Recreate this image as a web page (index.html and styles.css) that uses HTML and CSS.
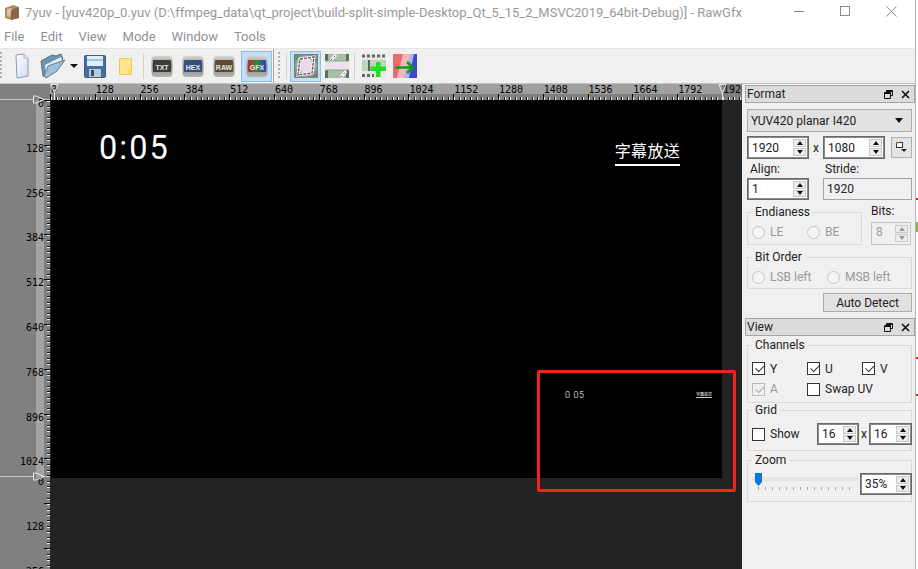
FILE: index.html
```html
<!DOCTYPE html>
<html>
<head>
    <meta charset="utf-8">
    <title>RawGfx</title>
    <link rel="stylesheet" href="styles.css">
</head>
<body>
<div id="screen">
<div id="window">
    <div class="titlebar">
        <svg class="app-icon" width="16" height="17" viewBox="0 0 16 17">
            <path d="M1 4 L9 1 L15 3 V14 L7 16 L1 14 Z" fill="#b08a68"/>
            <path d="M7 16 V6 L15 3 V14 Z" fill="#8a6646"/>
            <path d="M3 5 L8 4 L6 13 L3 12 Z" fill="#d9c3a8"/>
        </svg>
        <span class="title-text">7yuv - [yuv420p_0.yuv (D:\ffmpeg_data\qt_project\build-split-simple-Desktop_Qt_5_15_2_MSVC2019_64bit-Debug)] - RawGfx</span>
        <div class="win-btns">
            <svg width="11" height="11" viewBox="0 0 11 11"><path d="M0 5.5 H10" stroke="#8c8c8c"/></svg>
            <svg width="11" height="11" viewBox="0 0 11 11"><rect x="0.5" y="0.5" width="9" height="9" fill="none" stroke="#8c8c8c"/></svg>
            <svg width="11" height="11" viewBox="0 0 11 11"><path d="M0.5 0.5 L10.5 10.5 M10.5 0.5 L0.5 10.5" stroke="#8c8c8c"/></svg>
        </div>
    </div>

    <div class="menubar">
        <span>File</span><span>Edit</span><span>View</span><span>Mode</span><span>Window</span><span>Tools</span>
    </div>

    <div class="toolbar">
        <i class="grip first"></i>
        <div class="tool">
            <svg width="14" height="26" viewBox="0 0 14 26">
                <defs>
                    <linearGradient id="paper" x1="0" y1="0" x2="1" y2="1"><stop offset="0" stop-color="#ffffff"/><stop offset="1" stop-color="#cfdcf2"/></linearGradient>
                    <linearGradient id="shell" x1="0" y1="0" x2="0" y2="1"><stop offset="0" stop-color="#d8d4cc"/><stop offset="0.5" stop-color="#8a8a8a"/><stop offset="1" stop-color="#b8b4ac"/></linearGradient>
                </defs>
                <path d="M1 2 L9 1 L13 5 V23 L2 25 Z" fill="url(#paper)" stroke="#8a9ab4"/>
                <path d="M9 1 V5 H13" fill="#e8eefa" stroke="#a8b6cc"/>
            </svg>
        </div>
        <div class="tool">
            <svg width="26" height="26" viewBox="0 0 26 26">
                <path d="M1 8 L12 2 L16 3 L21 1 L23 6 L6 24 L3 23 Z" fill="#6f94b0" stroke="#5a6e80"/>
                <path d="M5 12 L21 4 L22 7 L6 20 Z" fill="#e3edf2"/>
                <path d="M4 23 L8 13 L25 7 L17 18 L6 25 Z" fill="#9fc0d8" stroke="#5f7c92"/>
            </svg>
        </div>
        <i class="drop"></i>
        <div class="tool">
            <svg width="22" height="23" viewBox="0 0 22 23">
                <rect x="0.5" y="0.5" width="21" height="22" rx="1" fill="#3f6ea8" stroke="#48586e"/>
                <rect x="3" y="1" width="16" height="10" fill="#dff0f6"/>
                <rect x="3" y="4" width="16" height="2" fill="#9cc6da"/>
                <rect x="5" y="14" width="12" height="8" fill="#b9c8d8"/>
                <rect x="7" y="15" width="3" height="6" fill="#3a4a60"/>
            </svg>
        </div>
        <div class="tool">
            <svg width="13" height="17" viewBox="0 0 13 17">
                <path d="M0.5 0.5 H12.5 V16.5 H0.5 Z" fill="#fee493" stroke="#f2c94c"/>
                <path d="M10 16 V12 H12.5" fill="none" stroke="#f2c94c"/>
            </svg>
        </div>
        <i class="sep"></i>
        <div class="tool"><svg width="22" height="23" viewBox="0 0 22 23"><rect x="0.5" y="1" width="21" height="21" rx="4" fill="url(#shell)"/><rect x="2" y="5" width="18" height="12" rx="1" fill="#3c3c3c"/><text x="11" y="14.5" class="chip">TXT</text></svg></div>
        <div class="tool"><svg width="22" height="23" viewBox="0 0 22 23"><rect x="0.5" y="1" width="21" height="21" rx="4" fill="url(#shell)"/><rect x="2" y="5" width="18" height="12" rx="1" fill="#34507e"/><text x="11" y="14.5" class="chip">HEX</text></svg></div>
        <div class="tool"><svg width="22" height="23" viewBox="0 0 22 23"><rect x="0.5" y="1" width="21" height="21" rx="4" fill="url(#shell)"/><rect x="2" y="5" width="18" height="12" rx="1" fill="#5c4a34"/><text x="11" y="14.5" class="chip">RAW</text></svg></div>
        <div class="tool on shift"><svg width="22" height="23" viewBox="0 0 22 23"><defs><linearGradient id="rgb" x1="0" y1="0" x2="1" y2="0"><stop offset="0" stop-color="#c02828"/><stop offset="0.5" stop-color="#2c8a3c"/><stop offset="1" stop-color="#2c3cc0"/></linearGradient></defs><rect x="0.5" y="1" width="21" height="21" rx="4" fill="url(#shell)"/><rect x="2" y="5" width="18" height="12" rx="1" fill="url(#rgb)"/><text x="11" y="14.5" class="chip">GFX</text></svg></div>
        <i class="break"></i>
        <i class="grip"></i>
        <i class="sep wide"></i>
        <div class="tool on">
            <svg width="24" height="24" viewBox="0 0 24 24">
                <defs><radialGradient id="glow"><stop offset="0.5" stop-color="#e8dce6"/><stop offset="1" stop-color="#6f8a74"/></radialGradient></defs>
                <rect width="24" height="24" fill="url(#glow)"/>
                <path d="M6 5 L20 3 L18 19 L4 21 Z" fill="none" stroke="#fff" stroke-width="3"/>
                <path d="M6 5 L20 3 L18 19 L4 21 Z" fill="none" stroke="#3c6e40" stroke-width="1.5" stroke-dasharray="3 5"/>
                <path d="M6 5 L20 3 L18 19 L4 21 Z" fill="none" stroke="#c030b0" stroke-width="1.5" stroke-dasharray="3 5" stroke-dashoffset="4"/>
            </svg>
        </div>
        <div class="tool">
            <svg width="24" height="24" viewBox="0 0 24 24">
                <rect width="24" height="24" fill="#a8bca8"/>
                <rect y="0" width="3" height="24" fill="#5f6e60"/>
                <rect x="21" y="0" width="3" height="24" fill="#5f6e60"/>
                <rect y="7" width="24" height="9" fill="#f0dff0"/>
                <path d="M0 7 H24 M0 16 H24" stroke="#6fb870"/>
                <path d="M6 6 L11 1 M16 23 L21 17" stroke="#fff" stroke-width="3"/>
                <path d="M6 6 L11 1 M16 23 L21 17" stroke="#a030a0" stroke-dasharray="2 2"/>
            </svg>
        </div>
        <i class="sep narrow"></i>
        <div class="tool">
            <svg width="24" height="24" viewBox="0 0 24 24">
                <rect width="24" height="24" fill="#ece4ec"/>
                <path d="M0 2 H24 M0 21.5 H12" stroke="#5f6e60" stroke-width="3" stroke-dasharray="3 2"/>
                <rect y="6" width="24" height="11" fill="#c0d2c0"/>
                <rect x="6" y="6" width="2" height="11" fill="#606060"/>
                <path d="M14 8 H18.5 V12.5 H24 V17 H18.5 V23 H14 V17 H8.5 V12.5 H14 Z" fill="#22e01c"/>
            </svg>
        </div>
        <div class="tool">
            <svg width="24" height="24" viewBox="0 0 24 24">
                <rect width="24" height="24" fill="#f4b8b8"/>
                <path d="M0 0 H10 L4 24 H0 Z" fill="#e86c6c"/>
                <path d="M17 0 H24 V24 H11 Z" fill="#aab2f0"/>
                <path d="M21 0 H24 V24 H16 Z" fill="#3c48c8"/>
                <path d="M2 13.5 H19 M14 8 L20 13.5 L14 19" fill="none" stroke="#169a16" stroke-width="2.5"/>
            </svg>
        </div>
    </div>

    <div class="main">
        <div class="workspace">
            <div class="corner"></div>
            <div class="hruler">
                <span>0</span><span>128</span><span>256</span><span>384</span><span>512</span><span>640</span><span>768</span><span>896</span><span>1024</span><span>1152</span><span>1280</span><span>1408</span><span>1536</span><span>1664</span><span>1792</span><span>1920</span>
            </div>
            <div class="vruler">
                <div class="vseg lit">
                    <span>0</span><span>128</span><span>256</span><span>384</span><span>512</span><span>640</span><span>768</span><span>896</span><span>1024</span>
                </div>
                <div class="vseg">
                    <span>0</span><span>128</span><span>256</span>
                </div>
            </div>
            <div class="canvas">
                <div class="frame">
                    <div class="frame-head">
                        <span class="clock">0:05</span>
                        <span class="caption">字幕放送</span>
                    </div>
                    <div class="pip">
                        <span class="pip-clock">0 05</span>
                        <span class="pip-caption">字幕放送</span>
                    </div>
                </div>
            </div>
            <svg class="marker m-left-a" width="50" height="9" viewBox="0 0 50 9"><path d="M0 4.5 H33 M44 4.5 H50" stroke="#c8c8c8"/><path d="M33.5 1 H36 L44 4.5 L36 8 H33.5 Z" fill="none" stroke="#e8e8e8"/></svg>
            <svg class="marker m-left-b" width="50" height="9" viewBox="0 0 50 9"><path d="M0 4.5 H33 M44 4.5 H50" stroke="#c8c8c8"/><path d="M33.5 1 H36 L44 4.5 L36 8 H33.5 Z" fill="none" stroke="#e8e8e8"/></svg>
            <svg class="marker m-top-a" width="9" height="16" viewBox="0 0 9 16"><path d="M1 0.5 H8 L4.5 9 Z M4.5 9 V16" fill="none" stroke="#e8e8e8"/></svg>
            <svg class="marker m-top-b" width="9" height="16" viewBox="0 0 9 16"><path d="M1 0.5 H8 L4.5 9 Z M4.5 9 V16" fill="none" stroke="#e8e8e8"/></svg>
            <div class="redbox"></div>
        </div>

        <div class="dock">
            <div class="dock-title"><span>Format</span>
                <svg width="9" height="9" viewBox="0 0 9 9"><path d="M2.5 2 V0.5 H8.5 V5.5 H6.5 M0.5 2.5 H6.5 V8.5 H0.5 Z M0.5 3.5 H6.5 M2.5 1.5 H8.5" fill="none" stroke="#111"/></svg>
                <svg width="9" height="9" viewBox="0 0 9 9"><path d="M1 1 L8 8 M8 1 L1 8" stroke="#111" stroke-width="1.6"/></svg>
            </div>
            <div class="panel">
                <div class="combo"><span>YUV420 planar I420</span><i class="tri"></i></div>
                <div class="row size-row">
                    <div class="spin w62"><span>1920</span><b class="arrows"><i></i><i></i></b></div>
                    <span class="times">x</span>
                    <div class="spin w62"><span>1080</span><b class="arrows"><i></i><i></i></b></div>
                    <div class="preset">
                        <svg width="11" height="11" viewBox="0 0 11 11"><rect x="0.5" y="0.5" width="6" height="5" fill="#fff" stroke="#333"/><path d="M0 1 H3" stroke="#e8a020"/><path d="M5 7 H11 L8 10 Z" fill="#222"/></svg>
                    </div>
                </div>
                <div class="row label-row"><span class="label-a">Align:</span><span>Stride:</span></div>
                <div class="row stride-row">
                    <div class="spin w62 h22"><span>1</span><b class="arrows"><i></i><i></i></b></div>
                    <div class="readonly">1920</div>
                </div>
                <div class="row endian-row">
                    <fieldset class="group endian">
                        <legend>Endianess</legend>
                        <div class="opts dim">
                            <label class="opt o55"><i class="radio"></i>LE</label>
                            <label class="opt"><i class="radio"></i>BE</label>
                        </div>
                    </fieldset>
                    <div class="bits">
                        <span>Bits:</span>
                        <div class="spin off"><span>8</span><b class="arrows"><i></i><i></i></b></div>
                    </div>
                </div>
                <fieldset class="group bitorder">
                    <legend>Bit Order</legend>
                    <div class="opts dim">
                        <label class="opt o75"><i class="radio"></i>LSB left</label>
                        <label class="opt"><i class="radio"></i>MSB left</label>
                    </div>
                </fieldset>
                <div class="btn-row"><button class="btn">Auto Detect</button></div>
            </div>

            <div class="dock-title second"><span>View</span>
                <svg width="9" height="9" viewBox="0 0 9 9"><path d="M2.5 2 V0.5 H8.5 V5.5 H6.5 M0.5 2.5 H6.5 V8.5 H0.5 Z M0.5 3.5 H6.5 M2.5 1.5 H8.5" fill="none" stroke="#111"/></svg>
                <svg width="9" height="9" viewBox="0 0 9 9"><path d="M1 1 L8 8 M8 1 L1 8" stroke="#111" stroke-width="1.6"/></svg>
            </div>
            <div class="panel">
                <fieldset class="group channels">
                    <legend>Channels</legend>
                    <div class="check-grid">
                        <label class="opt"><i class="check on"></i>Y</label>
                        <label class="opt"><i class="check on"></i>U</label>
                        <label class="opt"><i class="check on"></i>V</label>
                        <label class="opt dim"><i class="check on"></i>A</label>
                        <label class="opt swap"><i class="check"></i>Swap UV</label>
                    </div>
                </fieldset>
                <fieldset class="group grid">
                    <legend>Grid</legend>
                    <div class="grid-row">
                        <label class="opt show"><i class="check"></i>Show</label>
                        <div class="spin w42 h22"><span>16</span><b class="arrows"><i></i><i></i></b></div>
                        <span class="times small">x</span>
                        <div class="spin w43 h22"><span>16</span><b class="arrows"><i></i><i></i></b></div>
                    </div>
                </fieldset>
                <fieldset class="group zoom">
                    <legend>Zoom</legend>
                    <div class="zoom-row">
                        <div class="slider"><i class="thumb"></i><i class="ticks"></i></div>
                        <div class="spin w52 h22"><span>35%</span><b class="arrows"><i></i><i></i></b></div>
                    </div>
                </fieldset>
            </div>
        </div>
    </div>
</div>
<div class="edge">
    <i class="peek p1"></i><i class="peek p2"></i><i class="peek p3"></i><i class="peek p4"></i>
</div>
</div>
</body>
</html>
```

FILE: styles.css
```css
body, html {
    margin: 0;
    padding: 0;
    width: 100%;
    height: 100%;
    overflow: hidden;
    background: #fff;
}
#screen {
    display: flex;
    width: 918px;
    height: 569px;
    font-family: Roboto, "Noto Sans", sans-serif;
    font-size: 12px;
    color: #222;
}
#window {
    width: 915px;
    display: flex;
    flex-direction: column;
    background: #fff;
}
.edge {
    position: relative;
    width: 3px;
    border-left: 1px solid #b4b4b4;
    box-sizing: border-box;
}
.peek {
    position: absolute;
    left: 0;
    width: 2px;
    height: 2px;
    background: #d8261c;
}
.p1 { top: 198px; }
.p2 { top: 222px; height: 10px; background: #8fae3c; }
.p3 { top: 357px; }
.p4 { top: 394px; background: #8a4040; }

/* title + menu */
.titlebar {
    height: 24px;
    display: flex;
    align-items: center;
    padding-left: 4px;
    color: #999;
    font-size: 13px;
}
.app-icon { margin-right: 5px; }
.title-text { white-space: nowrap; }
.win-btns {
    margin-left: auto;
    display: flex;
    gap: 35px;
    padding-right: 18px;
    margin-top: -2px;
}
.menubar {
    height: 24px;
    display: flex;
    align-items: center;
    gap: 16px;
    padding-left: 4px;
    color: #8f8f9a;
    font-size: 13px;
    border-bottom: 1px solid #e6e6e6;
}

/* toolbar */
.toolbar {
    height: 34px;
    display: flex;
    align-items: center;
    background: #f0f0f0;
}
.tool {
    width: 31px;
    height: 31px;
    flex: none;
    display: flex;
    align-items: center;
    justify-content: center;
    box-sizing: border-box;
}
.tool.on {
    background: #c4def5;
    border: 1px solid #8dc0ec;
}
.tool.shift { margin-left: 2px; }
.chip {
    font: bold 7px "Liberation Sans", sans-serif;
    fill: #e8e8e8;
    text-anchor: middle;
}
.grip {
    width: 2px;
    height: 28px;
    margin-left: 4px;
    background: repeating-linear-gradient(#b0b0b0 0 2px, transparent 2px 4px);
}
.grip.first { margin-left: 0; margin-right: 4px; }
.drop {
    width: 0;
    height: 0;
    margin: 0 1px 0 2px;
    border-top: 4px solid #111;
    border-left: 4px solid transparent;
    border-right: 4px solid transparent;
}
.sep {
    width: 1px;
    height: 26px;
    margin: 0 2px;
    background: #d0d0d0;
}
.sep.wide { margin: 0 3px 0 6px; }
.sep.narrow { margin: 0 3px 0 2px; }
.break {
    width: 1px;
    height: 34px;
    margin-left: 1px;
    background: #a8a8a8;
}

/* workspace */
.main {
    flex: 1;
    display: flex;
    min-height: 0;
}
.workspace {
    position: relative;
    width: 742px;
    display: grid;
    grid-template-columns: 50px 692px;
    grid-template-rows: 16px 470px;
    overflow: hidden;
    background: #808080;
    border-top: 1px solid #c4c4c4;
    box-sizing: border-box;
}
.corner { background: #808080; }
.hruler {
    display: flex;
    font: 10px "DejaVu Sans Mono", monospace;
    color: #000;
    white-space: nowrap;
    overflow: hidden;
    background:
        repeating-linear-gradient(90deg, #000 0 1px, transparent 1px 44.8px) 0 100% / 100% 6px no-repeat,
        repeating-linear-gradient(90deg, #111 0 1px, #eee 1px 2px, transparent 2px 5.6px) 0 100% / 100% 3px no-repeat,
        linear-gradient(#a0a0a0, #a0a0a0) 0 0 / 672px 10px no-repeat,
        #808080;
}
.hruler span {
    flex: none;
    width: 44.8px;
    padding: 1px 0 0 1px;
    box-sizing: border-box;
    line-height: 9px;
}
.vruler {
    display: flex;
    flex-direction: column;
    font: 10px "DejaVu Sans Mono", monospace;
    color: #000;
    text-align: right;
    background:
        repeating-linear-gradient(#000 0 1px, transparent 1px 44.8px) 100% 0 / 6px 100% no-repeat,
        repeating-linear-gradient(#111 0 1px, #eee 1px 2px, transparent 2px 5.6px) 100% 0 / 3px 100% no-repeat;
}
.vseg {
    flex: none;
    height: 378px;
}
.vseg.lit {
    background: linear-gradient(#a4a4a4, #a4a4a4) 36px 0 / 8px 100% no-repeat;
}
.vseg span {
    display: block;
    height: 44.8px;
    padding: 0 6px 0 0;
    box-sizing: border-box;
    line-height: 7px;
}
.canvas {
    padding-left: 1px;
    background: #232323;
}
.frame {
    position: relative;
    width: 671px;
    height: 378px;
    background: #000;
    color: #fff;
}
.frame-head {
    display: flex;
    justify-content: space-between;
    align-items: flex-start;
    padding: 26px 42px 0 48px;
}
.clock {
    font: 400 32.5px/45px Roboto, sans-serif;
    letter-spacing: 2px;
}
.caption {
    margin-top: 14px;
    padding-bottom: 3px;
    font: 16px/21px "Noto Sans CJK SC", sans-serif;
    letter-spacing: 0.3px;
    border-bottom: 2px solid #fff;
}
.pip {
    position: absolute;
    left: 514px;
    top: 290px;
    width: 147px;
    display: flex;
    justify-content: space-between;
    align-items: flex-start;
}
.pip-clock {
    font: 300 9px/11px Roboto, sans-serif;
    letter-spacing: 0.6px;
}
.pip-caption {
    font: 4px/6px "Noto Sans CJK SC", sans-serif;
    border-bottom: 1px solid #ccc;
    margin-top: 1px;
}
.marker { position: absolute; }
.m-left-a { left: 0; top: 11px; }
.m-left-b { left: 0; top: 388px; }
.m-top-a { left: 50px; top: 0; }
.m-top-b { left: 718px; top: 0; }
.redbox {
    position: absolute;
    left: 537px;
    top: 286px;
    width: 199px;
    height: 122px;
    border: 3px solid #f2231a;
    border-radius: 2px;
    box-sizing: border-box;
}

/* dock */
.dock {
    width: 173px;
    padding: 1px 0 0 3px;
    box-sizing: border-box;
    background: #f0f0f0;
    border-top: 1px solid #c4c4c4;
}
.dock-title {
    height: 18px;
    box-sizing: border-box;
    display: flex;
    align-items: center;
    gap: 8px;
    padding: 0 4px 0 1px;
    background: #dcdcdc;
    border: 1px solid #a6a6a6;
    line-height: 16px;
}
.dock-title span { margin-right: auto; }
.dock-title.second { margin-top: 6px; }
.panel {
    padding: 0 3px 0 2px;
    line-height: 16px;
}
.panel > .combo { margin-top: 6px; }
.combo {
    height: 23px;
    box-sizing: border-box;
    display: flex;
    align-items: center;
    justify-content: space-between;
    padding: 0 8px 0 3px;
    background: #e1e1e1;
    border: 1px solid #adadad;
}
.tri {
    border-top: 5px solid #111;
    border-left: 4px solid transparent;
    border-right: 4px solid transparent;
}
.row { display: flex; }
.size-row { margin-top: 4px; align-items: center; }
.label-row { height: 19px; align-items: flex-end; padding-bottom: 1px; box-sizing: border-box; }
.label-a { width: 78px; padding-left: 3px; box-sizing: border-box; }
.stride-row { gap: 14px; }
.endian-row { margin-top: 5px; gap: 9px; }

.spin {
    display: flex;
    align-items: center;
    justify-content: space-between;
    height: 23px;
    box-sizing: border-box;
    padding: 0 0 0 3px;
    background: #fff;
    border: 1px solid #6a6a6a;
    box-shadow: inset 0 0 0 1px #8a8a8a;
}
.spin span { padding-left: 1px; }
.w62 { width: 62px; }
.w42 { width: 42px; }
.w43 { width: 43px; }
.w52 { width: 52px; }
.h22 { height: 22px; }
.arrows {
    width: 15px;
    height: 100%;
    padding: 2px 2px 2px 0;
    box-sizing: border-box;
    display: flex;
    flex-direction: column;
    gap: 1px;
}
.arrows i {
    flex: 1;
    display: flex;
    align-items: center;
    justify-content: center;
    background: #ededed;
    border: 1px solid #c8c8c8;
}
.arrows i::before {
    content: "";
    border-left: 3px solid transparent;
    border-right: 3px solid transparent;
    border-bottom: 4px solid #111;
}
.arrows i + i::before {
    border-bottom: 0;
    border-top: 4px solid #111;
}
.times { width: 14px; text-align: center; }
.preset {
    width: 21px;
    height: 21px;
    margin-left: 6px;
    display: flex;
    align-items: center;
    justify-content: center;
    background: #e4e4e4;
    border: 1px solid #b0b0b0;
    box-sizing: border-box;
}
.readonly {
    width: 89px;
    height: 22px;
    box-sizing: border-box;
    padding: 2px 3px;
    background: #f0f0f0;
    border: 1px solid #a4a4a4;
}

.group {
    margin: 0;
    padding: 0 4px;
    min-width: 0;
    border: 1px solid #dadada;
    box-sizing: border-box;
}
.group legend {
    margin-left: 0;
    padding: 0 3px;
    line-height: 14px;
}
.opts {
    display: flex;
    align-items: center;
    padding-top: 5px;
}
.opt {
    display: flex;
    align-items: center;
    gap: 5px;
    white-space: nowrap;
}
.dim { color: #9a9a9a; }
.o55 { width: 55px; }
.o75 { width: 75px; }
.radio {
    width: 13px;
    height: 13px;
    box-sizing: border-box;
    border: 1px solid #c4c4c4;
    border-radius: 50%;
    background: #f4f4f4;
}
.endian { width: 115px; height: 40px; }
.bits { width: 41px; margin-top: -2px; }
.bits span { display: block; height: 19px; }
.bits .spin {
    width: 40px;
    height: 23px;
    background: #f0f0f0;
    color: #9a9a9a;
    border: 1px solid #c4c4c4;
    box-shadow: none;
}
.bits .arrows i::before { border-bottom-color: #999; border-top-color: #999; }
.bitorder { height: 39px; margin-top: 5px; }
.btn-row { display: flex; justify-content: flex-end; margin-top: 4px; }
.btn {
    width: 89px;
    height: 19px;
    padding: 0;
    font: inherit;
    color: inherit;
    background: #e1e1e1;
    border: 1px solid #adadad;
}

.channels { height: 65px; margin-top: 2px; }
.check-grid {
    display: grid;
    grid-template-columns: 55px 55px 45px;
    grid-template-rows: 21px 20px;
    align-items: center;
    padding-top: 6px;
}
.swap { grid-column: span 2; }
.check {
    position: relative;
    width: 13px;
    height: 13px;
    box-sizing: border-box;
    background: #fff;
    border: 1px solid #333;
}
.check.on::after {
    content: "";
    position: absolute;
    left: 2px;
    top: 0;
    width: 7px;
    height: 4px;
    border-left: 1px solid #333;
    border-bottom: 1px solid #333;
    transform: rotate(-45deg) translate(-1px, 2px);
}
.dim .check { border-color: #bbb; background: #f0f0f0; }
.dim .check.on::after { border-color: #aaa; }
.grid { height: 48px; }
.grid-row {
    display: flex;
    align-items: center;
    padding-top: 6px;
    margin-right: -5px;
}
.show { width: 65px; }
.times.small { width: 10px; }
.zoom { height: 49px; margin-top: 2px; }
.zoom-row {
    display: flex;
    align-items: flex-start;
    justify-content: space-between;
    padding-top: 6px;
    margin-right: -5px;
}
.slider {
    position: relative;
    width: 106px;
    height: 20px;
    background: linear-gradient(#e4e4e4, #e4e4e4) 0 4px / 100% 4px no-repeat;
    border-radius: 1px;
}
.thumb {
    position: absolute;
    left: 3px;
    top: 0;
    width: 7px;
    height: 13px;
    background: #0a78d4;
    clip-path: polygon(0 0, 100% 0, 100% 70%, 50% 100%, 0 70%);
}
.ticks {
    position: absolute;
    left: 6px;
    top: 14px;
    width: 92px;
    height: 3px;
    background: repeating-linear-gradient(90deg, #a8a8a8 0 1px, transparent 1px 7px);
}
```
